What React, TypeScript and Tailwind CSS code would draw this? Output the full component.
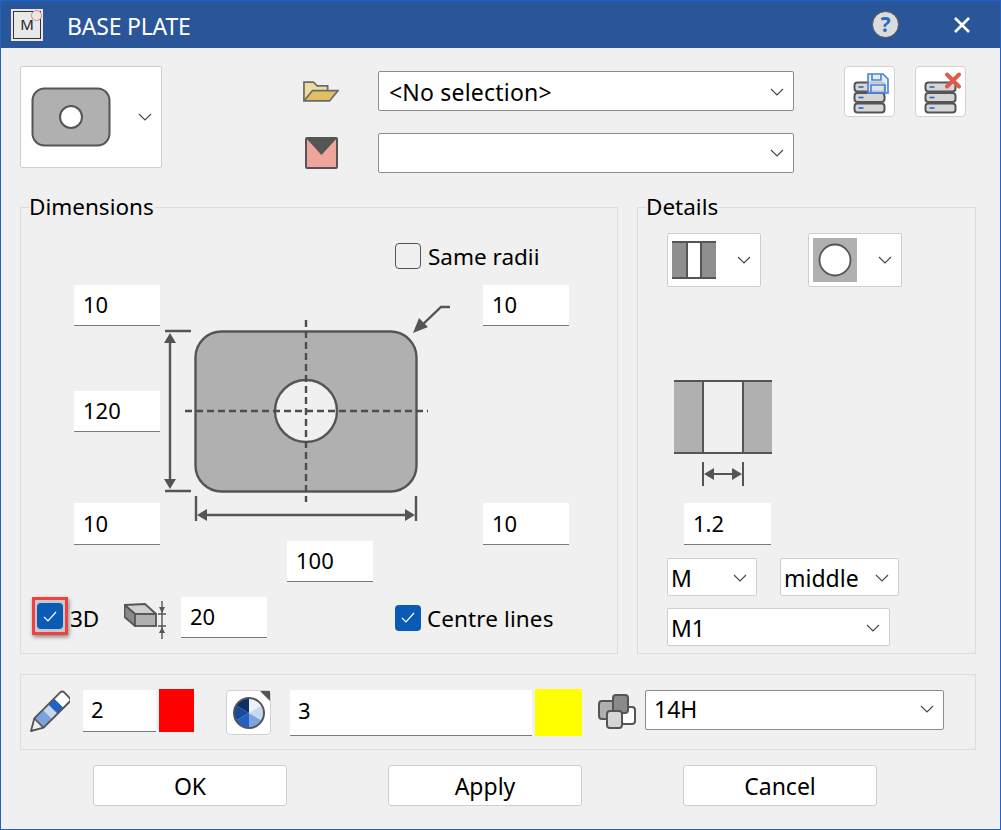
import { ReactNode } from "react";

const Chevron = ({ className = "" }: { className?: string }) => (
  <svg width="14" height="8" viewBox="0 0 14 8" className={className}>
    <path d="M1 1l6 6 6-6" fill="none" stroke="#444" strokeWidth="1.1" />
  </svg>
);

const Field = ({ value = "", className = "" }: { value?: string; className?: string }) => (
  <div className={`flex items-center bg-white border-b border-[#7a7a7a] pl-[9px] pb-[2px] text-[22px] leading-none text-black shrink-0 ${className}`}>
    {value}
  </div>
);

const Combo = ({ value = "", className = "" }: { value?: string; className?: string }) => (
  <div className={`flex items-center justify-between bg-white border border-[#8c8c8c] rounded-[2px] pl-[10px] pr-[9px] text-[23px] leading-none text-black shrink-0 ${className}`}>
    <span>{value}</span>
    <Chevron />
  </div>
);

const Check = () => (
  <div className="flex items-center justify-center w-[26px] h-[26px] rounded-[4px] bg-[#0a5bb5] shrink-0">
    <svg width="14" height="11" viewBox="0 0 14 11">
      <path d="M1 6l4 4 8-9" fill="none" stroke="#fff" strokeWidth="1.2" />
    </svg>
  </div>
);

const Group = ({ title, className, children }: { title: string; className: string; children: ReactNode }) => (
  <div className={`relative border border-[#dcdcdc] ${className}`}>
    <span className="absolute left-[8px] top-[-15px] text-[22.5px] leading-[28px] text-black bg-[#f0f0f0] pr-[1px]">{title}</span>
    {children}
  </div>
);

const IconBtn = ({ children, className = "" }: { children: ReactNode; className?: string }) => (
  <div className={`flex items-center justify-center bg-white border border-[#d2d2d2] rounded-[4px] shrink-0 ${className}`}>{children}</div>
);

const PickBtn = ({ children, className = "" }: { children: ReactNode; className?: string }) => (
  <div className={`flex items-center justify-between bg-white border border-[#cfcfcf] rounded-[2px] pl-[4px] pr-[9px] w-[94px] h-[54px] shrink-0 ${className}`}>
    {children}
    <Chevron />
  </div>
);

const ActionBtn = ({ label }: { label: string }) => (
  <div className="flex items-center justify-center w-[194px] h-[41px] pt-[2px] bg-white border border-[#cfcfcf] rounded-[3px] text-[23px] text-black">{label}</div>
);

const Stack = ({ save }: { save?: boolean }) => (
  <svg width="44" height="44" viewBox="0 0 44 44">
    {[12.5, 23, 33.5].map(y => (
      <g key={y}>
        <rect x="6.5" y={y} width="30" height="9" rx="3" fill="#d6d6d6" stroke="#555" strokeWidth="2" />
        <path d={`M10.5 ${y + 4.5}h5`} stroke="#2a66c8" strokeWidth="1.6" />
      </g>
    ))}
    {save ? (
      <g fill="#dfe8f6" fillOpacity="0.75" stroke="#4a80d6" strokeWidth="1.6">
        <path d="M20 4h15l5 5v14H20z" />
        <path d="M24 4v6h9V4M23 15h14v8H23z" fill="none" />
      </g>
    ) : (
      <path d="M28 4.5l12 12M40 4.5l-12 12" stroke="#dd5a4d" strokeWidth="4" strokeLinecap="round" />
    )}
  </svg>
);

const PlateDrawing = () => (
  <svg width="322" height="256" viewBox="160 285 322 256" className="col-start-2 col-end-5 row-start-1 row-end-6">
    <rect x="195.5" y="331.5" width="221" height="160" rx="26" fill="#b0b0b0" stroke="#555" strokeWidth="2.4" />
    <circle cx="306" cy="411" r="31" fill="#f0f0f0" stroke="#555" strokeWidth="2.4" />
    <g stroke="#4d4d4d" strokeWidth="2.4" strokeDasharray="7 4" fill="none">
      <path d="M185 411H428" />
      <path d="M306 320V502" />
    </g>
    <g stroke="#555" strokeWidth="2.4" fill="none">
      <path d="M165 331h26M165 491h26M170 336v150" />
      <path d="M196 496v25M416 496v25M200 515h212" />
      <path d="M450 307h-9l-22 21" />
    </g>
    <g fill="#555">
      <path d="M170 333l-6 10h12zM170 489l-6-10h12zM197 515l10-6v12zM415 515l-10-6v12zM413 333l6-15 9 9z" />
    </g>
  </svg>
);

export default function App() {
  return (
    <div className="w-[1001px] h-[830px] flex flex-col bg-[#f0f0f0] border-x border-b border-[#1f62c4] overflow-hidden font-['Noto_Sans','Open_Sans',sans-serif]">
      {/* title bar */}
      <div className="flex items-center h-[48px] bg-[#2a5699] border-t border-[#1565d2] shrink-0 text-white">
        <div className="relative ml-[10px] w-[32px] h-[32px] bg-[#e8e8e8] flex items-center justify-center shrink-0">
          <div className="w-[28px] h-[28px] border border-[#333] flex items-center justify-center text-[15px] leading-none text-[#222]">M</div>
          <div className="absolute right-[1px] top-[1px] w-[11px] h-[11px] rounded-full border border-[#e77] bg-[#e8e8e8]" />
        </div>
        <span className="ml-[24px] pt-[4px] text-[23px] leading-none tracking-[-0.2px]">BASE PLATE</span>
        <div className="ml-auto mr-[29px] flex items-center gap-[54px]">
          <div className="flex items-center justify-center w-[27px] h-[27px] rounded-full bg-[#dcdcdc] border border-[#555] text-[#2468c8] text-[21px] font-bold leading-none">?</div>
          <svg width="18" height="18" viewBox="0 0 18 18">
            <path d="M2 2l14 14M16 2L2 16" stroke="#fff" strokeWidth="2.6" />
          </svg>
        </div>
      </div>

      {/* top row */}
      <div className="relative h-[159px] shrink-0 pl-[19px] flex items-start">
        <div className="mt-[18px] flex items-center justify-between w-[142px] h-[102px] bg-white border border-[#cfcfcf] rounded-[2px] pl-[10px] pr-[9px] shrink-0">
          <svg width="80" height="60" viewBox="0 0 80 60">
            <rect x="1.5" y="1.5" width="77" height="57" rx="12" fill="#b0b0b0" stroke="#555" strokeWidth="2" />
            <circle cx="40" cy="30" r="11" fill="#fff" stroke="#555" strokeWidth="2" />
          </svg>
          <Chevron />
        </div>
        <div className="ml-[141px] mt-[23px] flex flex-col gap-[22px] shrink-0">
          <div className="flex items-center h-[40px]">
            <svg width="36" height="23" viewBox="0 0 38 24" className="shrink-0">
              <path d="M1 22V2h10l4 4h11v5" fill="#efdca0" stroke="#6a6a6a" strokeWidth="1.8" />
              <path d="M1 22l9-11h27l-9 11z" fill="#e0bf62" stroke="#6a6a6a" strokeWidth="1.8" />
            </svg>
            <Combo value="<No selection>" className="ml-[39px] w-[416px] h-[40px] pt-[2px] tracking-[0.2px]" />
          </div>
          <div className="flex items-center h-[40px]">
            <svg width="38" height="32" viewBox="0 0 38 32" className="shrink-0">
              <rect x="3" y="1" width="31" height="30" rx="1" fill="#eda59c" stroke="#555" strokeWidth="2" />
              <path d="M3 1h31L18.5 18z" fill="#555" />
            </svg>
            <Combo className="ml-[37px] w-[416px] h-[40px]" />
          </div>
        </div>
        <div className="ml-[50px] mt-[18px] flex gap-[20px] shrink-0">
          <IconBtn className="w-[51px] h-[51px]"><Stack save /></IconBtn>
          <IconBtn className="w-[51px] h-[51px]"><Stack /></IconBtn>
        </div>
      </div>

      {/* groups */}
      <div className="flex pl-[19px] gap-[19px] shrink-0">
        <Group title="Dimensions" className="w-[598px] h-[447px]">
          <div className="ml-[374px] mt-[35px] flex items-center gap-[7px] h-[26px]">
            <div className="w-[26px] h-[26px] rounded-[4px] border border-[#555] bg-[#f0f0f0]" />
            <span className="pt-[2px] text-[22.5px] leading-none text-black">Same radii</span>
          </div>
          <div className="mt-[16px] ml-[52px] grid grid-cols-[87px_126px_87px_109px_87px] grid-rows-[41px_65px_41px_71px_38px_41px]">
            <PlateDrawing />
            <Field value="10" className="col-start-1 row-start-1 ml-[1px] h-[41px]" />
            <Field value="10" className="col-start-5 row-start-1 ml-[1px] h-[41px]" />
            <Field value="120" className="col-start-1 row-start-3 ml-[1px] h-[41px]" />
            <Field value="10" className="col-start-1 row-start-5 ml-[1px] h-[42px]" />
            <Field value="10" className="col-start-5 row-start-5 ml-[1px] h-[42px]" />
            <Field value="100" className="col-start-3 row-start-6 ml-[1px] h-[41px]" />
          </div>
          <div className="mt-[15px] ml-[11px] flex items-center h-[41px]">
            <div className="mt-[-3px] flex items-center justify-center w-[36px] h-[38px] bg-[#c8c8c8] border-[3px] border-[#f04040] shadow-[1px_2px_4px_rgba(0,0,0,0.45)] shrink-0">
              <Check />
            </div>
            <span className="ml-[2px] pt-[4px] text-[22.5px] leading-none text-black w-[35px]">3D</span>
            <svg width="44" height="38" viewBox="0 0 44 38" className="ml-[19px] mt-[4px] shrink-0">
              <path d="M0.5 4L21 3l11 10H11z" fill="#d0d0d0" stroke="#555" strokeWidth="1.8" strokeLinejoin="round" />
              <path d="M0.5 4L11 13v12L0.5 16z" fill="#8a8a8a" stroke="#555" strokeWidth="1.8" strokeLinejoin="round" />
              <rect x="11" y="13" width="21" height="12" fill="#b0b0b0" stroke="#555" strokeWidth="1.8" />
              <path d="M38 0v38M34 13h8M34 25h8" stroke="#555" strokeWidth="1.4" fill="none" />
              <path d="M35 6l3 6 3-6zM35 32l3-6 3 6z" fill="#555" />
            </svg>
            <Field value="20" className="ml-[13px] w-[86px] h-[41px]" />
            <div className="ml-[128px] shrink-0"><Check /></div>
            <span className="ml-[6px] pt-[4px] text-[22.5px] tracking-[0.1px] leading-none text-black">Centre lines</span>
          </div>
        </Group>

        <Group title="Details" className="w-[339px] h-[447px]">
          <div className="ml-[29px] mt-[25px] flex gap-[47px]">
            <PickBtn>
              <svg width="44" height="38" viewBox="0 0 44 38">
                <rect width="44" height="38" fill="#8f8f8f" />
                <rect x="15" y="1" width="14" height="36" fill="#fff" />
                <path d="M0 1h44M0 37h44M15 0v38M29 0v38" stroke="#555" strokeWidth="2" />
              </svg>
            </PickBtn>
            <PickBtn>
              <svg width="44" height="44" viewBox="0 0 44 44">
                <rect width="44" height="44" fill="#b0b0b0" />
                <circle cx="22" cy="22" r="15.5" fill="#fff" stroke="#555" strokeWidth="1.8" />
              </svg>
            </PickBtn>
          </div>
          <svg width="98" height="108" viewBox="0 0 98 108" className="ml-[36px] mt-[93px] block">
            <rect x="0" y="1" width="98" height="72" fill="#b0b0b0" />
            <rect x="29" y="1" width="40" height="72" fill="#f0f0f0" />
            <path d="M0 1h98M0 73h98M29 1v72M69 1v72" stroke="#555" strokeWidth="2" fill="none" />
            <path d="M29 82v24M69 82v24M36 94h26" stroke="#555" strokeWidth="2" />
            <path d="M30 94l10-6v12zM68 94l-10-6v12z" fill="#555" />
          </svg>
          <Field value="1.2" className="ml-[46px] mt-[15px] w-[87px] h-[42px]" />
          <div className="ml-[29px] mt-[13px] flex gap-[23px]">
            <Combo value="M" className="w-[90px] h-[38px] pt-[2px] border-[#cfcfcf] !pl-[3px]" />
            <Combo value="middle" className="w-[119px] h-[38px] pt-[2px] border-[#cfcfcf] !pl-[3px]" />
          </div>
          <Combo value="M1" className="ml-[29px] mt-[12px] w-[223px] h-[38px] pt-[2px] border-[#cfcfcf] !pl-[3px]" />
        </Group>
      </div>

      {/* bottom group */}
      <div className="ml-[19px] mt-[20px] w-[956px] h-[76px] border border-[#dcdcdc] flex items-start shrink-0">
        <svg width="40" height="44" viewBox="0 0 40 44" className="ml-[9px] mt-[15px] shrink-0">
          <g transform="translate(1 41) rotate(-45) scale(0.94)">
            <path d="M13 -7h12v14h-12z" fill="#7ba3de" />
            <path d="M25 -7h8v14h-8z" fill="#c5d8f0" />
            <path d="M33 -7h9v14h-9z" fill="#2160c4" />
            <path d="M42 -7h9q3 0 3 3v8q0 3-3 3h-9z" fill="#fff" />
            <path d="M0 0L12 -7H51q3 0 3 3v8q0 3-3 3H12z" fill="none" stroke="#555" strokeWidth="2" strokeLinejoin="round" />
            <path d="M12 -7v14" stroke="#555" strokeWidth="2" />
          </g>
        </svg>
        <Field value="2" className="ml-[13px] mt-[15px] w-[73px] h-[42px] !pl-[8px] !pb-[4px]" />
        <div className="ml-[3px] mt-[14px] w-[35px] h-[43px] bg-[#ff0000] shrink-0" />
        <div className="relative ml-[32px] mt-[15px] flex items-center justify-center w-[45px] h-[45px] bg-white border border-[#d2d2d2] rounded-[4px] shrink-0">
          <svg width="34" height="34" viewBox="0 0 34 34">
            <circle cx="17" cy="17" r="15" fill="#eef2f8" />
            <path d="M17 17L17 2A15 15 0 0 0 4 9.5z" fill="#0f2f66" />
            <path d="M17 17L4 9.5A15 15 0 0 0 4 24.5z" fill="#174a99" />
            <path d="M17 17L4 24.5A15 15 0 0 0 17 32z" fill="#2160c4" />
            <path d="M17 17V32A15 15 0 0 0 30 24.5z" fill="#7ba3de" />
            <path d="M17 17L30 24.5A15 15 0 0 0 30 9.5z" fill="#c5d8f0" />
            <circle cx="17" cy="17" r="15" fill="none" stroke="#555" strokeWidth="2" />
          </svg>
          <div className="absolute right-0 top-0 w-0 h-0 border-t-[10px] border-l-[10px] border-t-[#555] border-l-transparent" />
        </div>
        <Field value="3" className="ml-[19px] mt-[15px] w-[242px] h-[46px] !pl-[8px] !pb-[6px]" />
        <div className="ml-[3px] mt-[14px] w-[47px] h-[47px] bg-[#ffff00] shrink-0" />
        <svg width="40" height="36" viewBox="0 0 40 36" className="ml-[15px] mt-[19px] shrink-0">
          <rect x="24" y="13" width="14" height="17" rx="3" fill="#fff" stroke="#555" strokeWidth="2" />
          <rect x="2" y="7" width="18" height="18" rx="3" fill="#b0b0b0" stroke="#555" strokeWidth="2" />
          <rect x="16" y="1" width="15" height="18" rx="3" fill="#8a8a8a" stroke="#555" strokeWidth="2" />
          <rect x="10" y="17" width="15" height="17" rx="3" fill="#d6d6d6" stroke="#555" strokeWidth="2" />
        </svg>
        <Combo value="14H" className="ml-[8px] mt-[15px] w-[299px] h-[40px] !pl-[8px] pb-[2px]" />
      </div>

      {/* actions */}
      <div className="ml-[92px] mt-[15px] flex gap-[101px] shrink-0">
        <ActionBtn label="OK" />
        <ActionBtn label="Apply" />
        <ActionBtn label="Cancel" />
      </div>
    </div>
  );
}
